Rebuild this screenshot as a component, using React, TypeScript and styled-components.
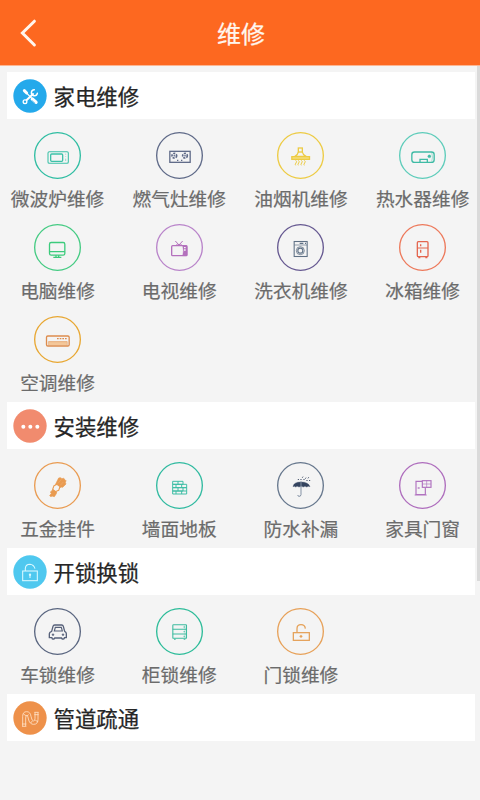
import React from "react";
import styled, { createGlobalStyle } from "styled-components";

const GlobalStyle = createGlobalStyle`
  * { box-sizing: border-box; }
  body {
    margin: 0;
    background: #f4f4f4;
    font-family: "Noto Sans CJK SC", "Noto Sans", sans-serif;
  }
`;

const Screen = styled.div`
  position: relative;
  width: 480px;
  height: 800px;
  overflow: hidden;
  background: #f4f4f4;
`;

const TopBar = styled.header`
  display: grid;
  grid-template-columns: 60px 1fr 60px;
  align-items: center;
  height: 66px;
  background: #fd6820;
  border-bottom: 1px solid #fcb692;
`;

const BackButton = styled.button`
  display: flex;
  width: 60px;
  height: 65px;
  padding: 0;
  border: 0;
  background: none;
  align-items: center;
  justify-content: center;
`;

const Title = styled.h1`
  margin: 1px 0 0 2px;
  font-size: 24px;
  line-height: 36px;
  font-weight: 400;
  color: #fff6ee;
  text-align: center;
  -webkit-text-stroke: 0.25px currentColor;
`;

const Content = styled.main`
  padding: 6px 5px 0 7px;
`;

const SectionHeader = styled.div`
  display: flex;
  align-items: center;
  gap: 6.5px;
  height: 47px;
  padding: 0 0 0 6px;
  background: #fff;
`;

const SectionTitle = styled.h2`
  margin: 0;
  font-size: 21.4px;
  line-height: 32px;
  font-weight: 400;
  color: #262626;
  -webkit-text-stroke: 0.25px currentColor;
`;

const Badge = styled.svg`
  width: 34px;
  height: 34px;
  flex: none;
  fill: none;
  stroke: #fff;
  stroke-width: 3.5;
`;

const ServiceGrid = styled.div`
  display: grid;
  grid-template-columns: repeat(4, 121.7px);
  grid-auto-rows: 81px;
  row-gap: 11px;
  margin-left: -10.3px;
  padding: 13px 0 5px;
`;

const Service = styled.div`
  display: flex;
  flex-direction: column;
  align-items: center;
  gap: 5px;
`;

const ServiceIcon = styled.svg<{ $color: string; $ring?: string }>`
  width: 47px;
  height: 47px;
  flex: none;
  fill: none;
  stroke: ${(p) => p.$color};
  stroke-width: 3.9;
  color: ${(p) => p.$color};

  .ring {
    stroke: ${(p) => p.$ring || p.$color};
    stroke-width: 4;
  }
  .solid {
    fill: currentColor;
  }
`;

const ServiceLabel = styled.span`
  font-size: 18.7px;
  line-height: 28px;
  color: #6b6b6b;
  white-space: nowrap;
  -webkit-text-stroke: 0.2px currentColor;
`;

const ScrollThumb = styled.div`
  position: absolute;
  top: 66px;
  right: 0;
  width: 3.5px;
  height: 515px;
  background: #dadada;
`;

type Item = { label: string; color: string; ring?: string; icon: React.ReactNode };
type Group = { title: string; badgeColor: string; badge: React.ReactNode; items: Item[] };

const groups: Group[] = [
  {
    title: "家电维修",
    badgeColor: "#24a9eb",
    badge: (
      <g strokeLinecap="round">
        <path d="M34 35 L41 42" strokeWidth="9" />
        <path d="M39 40 L61 63" strokeWidth="3.5" />
        <path d="M58 60 L69 70" strokeWidth="10" />
        <path d="M58 65 L66 72" stroke="#24a9eb" strokeWidth="1.5" />
        <path d="M38 66 L60 45" strokeWidth="6" />
        <path d="M64 32 A9 9 0 1 0 73 43" strokeWidth="4.5" />
        <circle cx="36" cy="68" r="5.5" strokeWidth="4" fill="#24a9eb" />
      </g>
    ),
    items: [
      {
        label: "微波炉维修", color: "#3cc1a8", ring: "#2fbda2",
        icon: (<><rect x="42" y="59" width="61" height="35" rx="4" strokeWidth="3.2" /><rect x="50" y="66" width="36" height="22" rx="3" /><path d="M95 65v3M95 73v2M95 80v7" strokeWidth="1.5" /></>),
      },
      {
        label: "燃气灶维修", color: "#5f6a88",
        icon: (<><rect x="41.5" y="58" width="61" height="33" /><circle cx="55" cy="71" r="7" strokeDasharray="6 2.8" strokeWidth="5" /><circle cx="87" cy="71" r="7" strokeDasharray="6 2.8" strokeWidth="5" /><circle cx="55" cy="71" r="2" className="solid" strokeWidth="1" /><circle cx="87" cy="71" r="2" className="solid" strokeWidth="1" /><path d="M63 85h4M75 85h4" strokeWidth="4" /></>),
      },
      {
        label: "油烟机维修", color: "#edcb43",
        icon: (<><rect x="64" y="48" width="12" height="12" /><path d="M64 60Q63 67 54 73h33Q77 67 76 60" /><rect x="44.5" y="74" width="53" height="8" fill="#f5df81" /><path d="M56 85q5 4 1 8t-1 7M64 85q5 4 1 8t-1 7M73 85q5 4 1 8t-1 7M82 85q5 4 1 8t-1 7" strokeWidth="3" /></>),
      },
      {
        label: "热水器维修", color: "#3fbba5", ring: "#5dccba",
        icon: (<><rect x="38.5" y="60" width="67" height="31" rx="8" strokeWidth="4" /><circle cx="91" cy="73" r="4.5" className="solid" strokeWidth="1" /><path d="M63 91v-9h22v9" /><path d="M98 61q5 15 0 28" strokeWidth="1.2" /></>),
      },
      {
        label: "电脑维修", color: "#3ccb7c", ring: "#45cb83",
        icon: (<><rect x="46.5" y="55.5" width="46" height="38" rx="5" /><path d="M47 83h45M66 94v6M74 94v6M58 100h24" /></>),
      },
      {
        label: "电视维修", color: "#b471bd", ring: "#b984ca",
        icon: (<><rect x="47" y="65" width="46" height="30" rx="3" strokeWidth="4" /><path d="M58 51l11 12L80 51" strokeWidth="3" /><path d="M80 65h13v30H80q4-15 0-30Z" className="solid" strokeWidth="1" /><path d="M84 71h5M84 78h5" stroke="#f4f4f4" strokeWidth="4" /><path d="M60 63h18" strokeWidth="3" /></>),
      },
      {
        label: "洗衣机维修", color: "#5f7185", ring: "#665991",
        icon: (<><rect x="51.5" y="52.5" width="39" height="45" strokeWidth="3.2" /><path d="M52 63h38" strokeWidth="2" /><path d="M68 58h11M84 58h3" strokeWidth="3.6" /><circle cx="70" cy="80" r="12" strokeWidth="2.4" /><circle cx="70" cy="80" r="7.5" strokeWidth="3.4" /></>),
      },
      {
        label: "冰箱维修", color: "#e4664f", ring: "#ed795b",
        icon: (<><rect x="55" y="53" width="32" height="45" rx="3" /><path d="M55 72h32" strokeWidth="3" /><path d="M65 61v6M65 77v9" strokeWidth="4" /><path d="M58 101h6M79 101h6" strokeWidth="4" /></>),
      },
      {
        label: "空调维修", color: "#dd8c4d", ring: "#e8a732",
        icon: (<><path d="M44 76h55v12H44Z" fill="#f4c79a" stroke="none" /><rect x="37.5" y="60" width="68" height="30" rx="4" /><path d="M43 77h57M43 88v-11M100 88v-11" strokeWidth="1.5" /><path d="M69 68h5M77 68h5M85 68h5M93 68h5" strokeWidth="4" /></>),
      },
    ],
  },
  {
    title: "安装维修",
    badgeColor: "#f18b6e",
    badge: (
      <g fill="#fff" stroke="none">
        <circle cx="31" cy="53" r="6" />
        <circle cx="52" cy="53" r="6" />
        <circle cx="73" cy="53" r="6" />
      </g>
    ),
    items: [
      {
        label: "五金挂件", color: "#e99b51",
        icon: (<g><path d="M74 48l5-1 5 3 5-1 4 4 3 3-2 6 2 4-10 10-5-1-4 3-13-10Z" className="solid" strokeWidth="2" /><path d="M60 71l9-4 9 7-4 11-10 4-8-7Z" fill="#f4f4f4" strokeWidth="3.4" /><path d="M56 83l-4 5-3 2 3 4-5 7 4 3 3-2 7 2 6-9 1-5Z" className="solid" strokeWidth="2" /><path d="M72 64l10-12M79 70l9-10" stroke="#f2bd8d" strokeWidth="1" /></g>),
      },
      {
        label: "墙面地板", color: "#3bbda4", ring: "#30baa0",
        icon: (<path strokeWidth="2.9" d="M50 58h31v9H50ZM50 67h42v10H50ZM50 77h31v10H50ZM50 87h42v9H50ZM66 58v9M60 67v10M77 67v10M66 77v10M60 87v9M77 87v9M81 77h11v10" />),
      },
      {
        label: "防水补漏", color: "#34445f", ring: "#66778d",
        icon: (<><path d="M48 74Q50 60 72 60T99 74Q94 71 89 75Q84 71 79 75Q73 71 66 75Q60 71 56 75Q52 71 48 74Z" className="solid" strokeWidth="1" /><path d="M72 58v40q-1 6-6 5q-4-1-4-4" stroke="#8492a5" strokeWidth="3" /><path d="M63 54l2-3M71 54l2-3M76 47l2-3M80 54l2-3M85 50l2-3M93 49l2-3M89 57l2-3M97 57l2-3" strokeWidth="3" /></>),
      },
      {
        label: "家具门窗", color: "#b173c0", ring: "#ae6dbd",
        icon: (<><path d="M69 58H51v40h28V77M47 99h36" strokeWidth="3.5" /><path d="M56 78h6" strokeWidth="4" /><rect x="70" y="56" width="26" height="20" strokeWidth="3.5" /><path d="M83 56v20M70 66h26" strokeWidth="2" /></>),
      },
    ],
  },
  {
    title: "开锁换锁",
    badgeColor: "#4fc8ef",
    badge: (
      <g stroke="#d9f8ff" strokeWidth="3.2">
        <rect x="29" y="48" width="44" height="29" />
        <path d="M37 48V40Q38 28 51 28Q62 29 66 41" />
        <circle cx="51" cy="59" r="2" fill="#fff" />
        <path d="M51 60v9" />
      </g>
    ),
    items: [
      {
        label: "车锁维修", color: "#566079", ring: "#5a6680",
        icon: (<><path d="M53 70l4-15q1-4 5-4h21q4 0 5 4l4 15q5 2 5 7v12H91v2q0 2-3 2h-3q-2 0-2-3H62q0 3-3 3h-3q-2 0-2-4H46V77q0-5 7-7Z" strokeWidth="4" strokeLinejoin="round" /><path d="M61 69l3-11h18l3 11Z" strokeWidth="3.4" /><circle cx="57" cy="80" r="2.7" className="solid" strokeWidth="1.5" /><circle cx="87" cy="80" r="2.7" className="solid" strokeWidth="1.5" /></>),
      },
      {
        label: "柜锁维修", color: "#3dbb9f", ring: "#2dbc99",
        icon: (<><rect x="50.5" y="50" width="41" height="41" rx="2" strokeWidth="3.2" /><path d="M50 64h41M50 78h41M54 94h5M83 94h5" strokeWidth="3.2" /><path d="M83 57h3M83 71h3M83 85h3" strokeWidth="4" /><path d="M87 52v38" strokeWidth="1" /></>),
      },
      {
        label: "门锁维修", color: "#e5a158", ring: "#e7a159",
        icon: (<><rect x="49" y="74" width="48" height="23" strokeWidth="3.8" /><path d="M60 73V62Q60 50 72 50Q84 50 85 62" strokeWidth="3.8" /><circle cx="72" cy="85" r="3.5" className="solid" strokeWidth="1" /></>),
      },
    ],
  },
  {
    title: "管道疏通",
    badgeColor: "#ee914a",
    badge: (
      <g stroke="#ffe2c8" strokeWidth="2.5">
        <path d="M29 75V46Q29 32 41 32Q52 32 54 46Q56 60 62 60Q66 60 66 52V34" strokeWidth="2.5" />
        <path d="M38 75V51Q38 42 42 43Q45 45 47 57Q51 70 62 70Q75 70 75 55V34" />
        <path d="M27 76h13M27 69h13M64 34h13M64 41h13M31 39l8 5M67 58l8 4M47 41l-6 4M53 66l5-6" />
      </g>
    ),
    items: [],
  },
];

export default function App() {
  return (
    <>
      <GlobalStyle />
      <Screen>
        <TopBar>
          <BackButton aria-label="返回">
            <svg width="20" height="30" viewBox="0 0 20 30" fill="none" stroke="#fff6ee" strokeWidth="3">
              <path d="M14.4 3.2L2.4 15L14.4 27" strokeLinecap="round" />
            </svg>
          </BackButton>
          <Title>维修</Title>
        </TopBar>
        <Content>
          {groups.map((group) => (
            <section key={group.title}>
              <SectionHeader>
                <Badge viewBox="0 0 102 102">
                  <circle cx="51" cy="51" r="50" fill={group.badgeColor} stroke="none" />
                  {group.badge}
                </Badge>
                <SectionTitle>{group.title}</SectionTitle>
              </SectionHeader>
              {group.items.length > 0 && (
                <ServiceGrid>
                  {group.items.map((item) => (
                    <Service key={item.label}>
                      <ServiceIcon viewBox="0 0 141 141" $color={item.color} $ring={item.ring}>
                        <circle className="ring" cx="70.5" cy="70.5" r="68.5" />
                        {item.icon}
                      </ServiceIcon>
                      <ServiceLabel>{item.label}</ServiceLabel>
                    </Service>
                  ))}
                </ServiceGrid>
              )}
            </section>
          ))}
        </Content>
        <ScrollThumb />
      </Screen>
    </>
  );
}
